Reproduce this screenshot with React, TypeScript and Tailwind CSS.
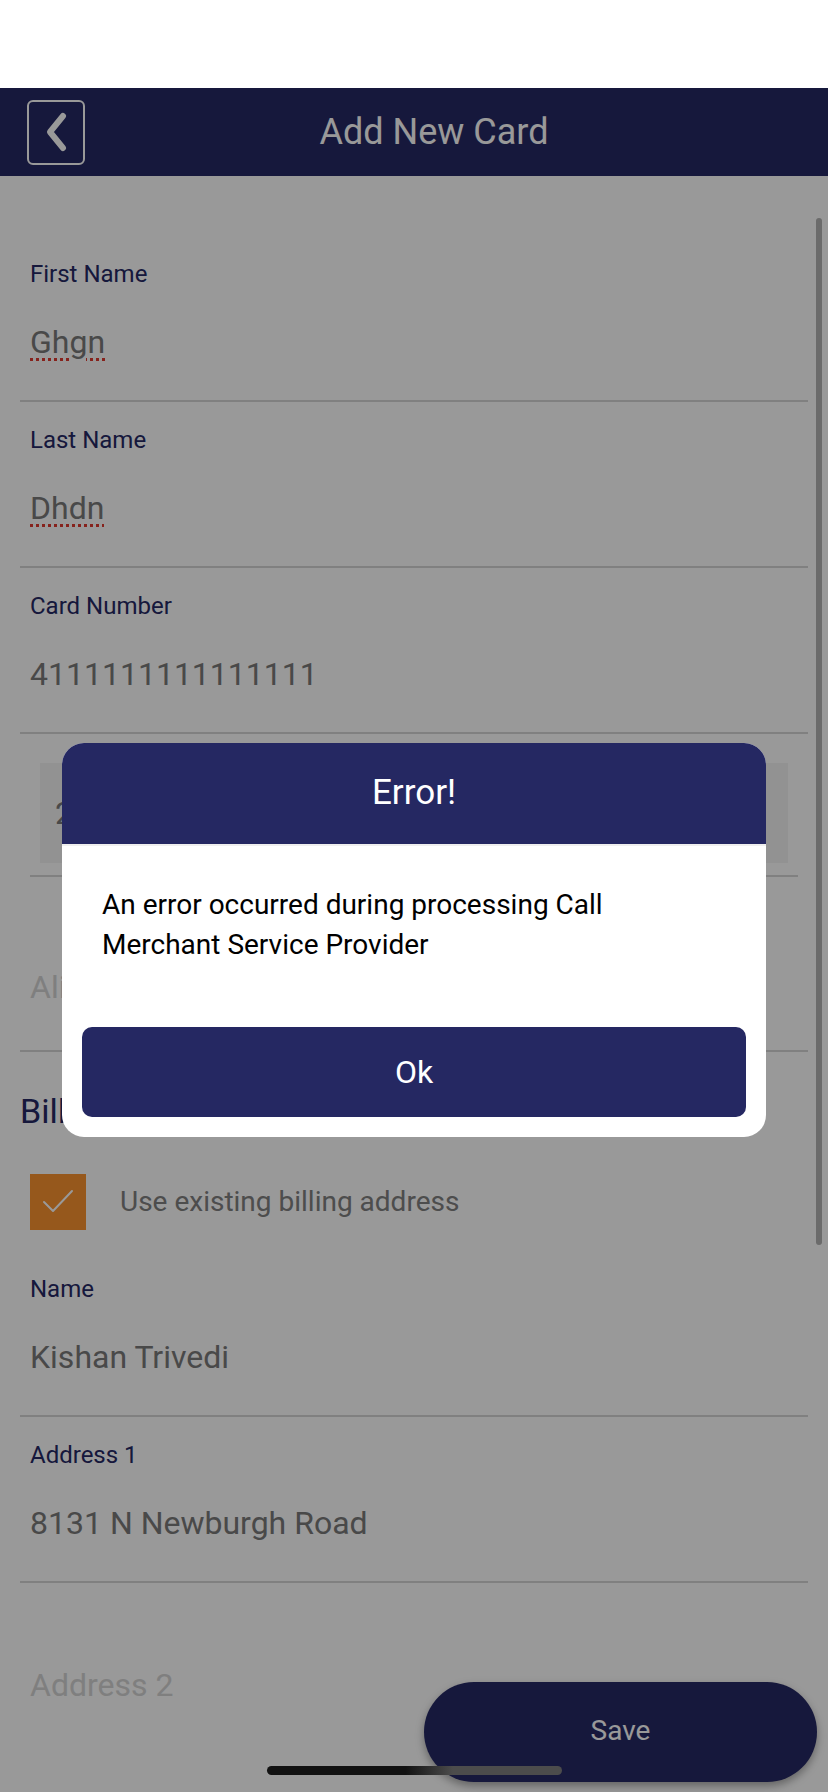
import React from 'react'

type FieldProps = {
  label?: string
  value?: string
  placeholder?: string
  spell?: boolean
  pad?: string
}

function Field({ label, value, placeholder, spell, pad = 'pt-[26px] pb-[42px]' }: FieldProps) {
  return (
    <div className={`border-b-2 border-[#d6d6d6] px-[10px] ${pad}`}>
      {label && <div className="h-[24px] text-[24px] leading-none text-[#252864] mb-[40px]">{label}</div>}
      <div className="h-[32px] text-[32px] leading-none">
        {value ? (
          <span
            className={
              spell
                ? 'text-[#7a7a7a] underline decoration-dotted decoration-[#e0392f] decoration-[3px] underline-offset-[5px]'
                : 'text-[#7a7a7a]'
            }
          >
            {value}
          </span>
        ) : (
          <span className="text-[#d4d4d4]">{placeholder}</span>
        )}
      </div>
    </div>
  )
}

export default function App() {
  return (
    <div className="relative w-[828px] h-[1792px] overflow-hidden bg-white font-['Roboto',sans-serif]">
      {/* status bar */}
      <div className="h-[88px] bg-white" />

      <header className="h-[88px] bg-[#252864] flex items-center">
        <button className="ml-[27px] w-[58px] h-[65px] border-2 border-white rounded-[6px] flex items-center justify-center">
          <svg width="30" height="48" viewBox="0 0 30 48">
            <path d="M22 8 L9 24 L22 40" fill="none" stroke="white" strokeWidth="6" strokeLinecap="round" strokeLinejoin="round" />
          </svg>
        </button>
        <h1 className="flex-1 pr-[45px] text-center text-white text-[36px] leading-none">Add New Card</h1>
      </header>

      <main className="px-[20px] pt-[60px]">
        <Field label="First Name" value="Ghgn" spell />
        <Field label="Last Name" value="Dhdn" spell />
        <Field label="Card Number" value="4111111111111111" />

        <div className="mx-[10px] pt-[29px] pb-[12px] border-b-2 border-[#d6d6d6]">
          <div className="mx-[10px] h-[100px] bg-[#f3f3f3] flex items-center pl-[15px] text-[32px] leading-none text-[#7a7a7a]">
            2026
          </div>
        </div>

        <Field placeholder="Alias" pad="pt-[94px] pb-[47px]" />

        <h2 className="mt-[42px] text-[34px] leading-none text-[#252864]">Billing Address</h2>

        <label className="mt-[46px] mb-[21px] flex items-center">
          <span className="ml-[10px] w-[56px] h-[56px] bg-[#fa9330] flex items-center justify-center">
            <svg width="56" height="56" viewBox="0 0 56 56">
              <path d="M14 28 L23 37 L42 17" fill="none" stroke="white" strokeWidth="2" strokeLinecap="round" strokeLinejoin="round" />
            </svg>
          </span>
          <span className="ml-[34px] text-[28px] leading-none text-[#808080]">Use existing billing address</span>
        </label>

        <Field label="Name" value="Kishan Trivedi" />
        <Field label="Address 1" value="8131 N Newburgh Road" />
        <div className="px-[10px] pt-[86px]">
          <div className="h-[32px] text-[32px] leading-none text-[#d4d4d4]">Address 2</div>
        </div>
      </main>

      {/* scrollbar */}
      <div className="absolute left-[816px] top-[218px] w-[6px] h-[1027px] rounded-full bg-[#b2b2b2]" />

      <button className="absolute left-[424px] top-[1682px] w-[393px] h-[100px] rounded-full bg-[#252864] shadow-[0_4px_8px_rgba(0,0,0,0.35)] text-white text-[28px] leading-none flex items-center justify-center pb-[3px]">
        Save
      </button>

      {/* dim overlay */}
      <div className="absolute left-0 right-0 top-[88px] bottom-0 bg-black/40" />

      {/* error dialog */}
      <div className="absolute left-[62px] top-[743px] w-[704px] h-[394px] rounded-[22px] bg-white overflow-hidden flex flex-col">
        <div className="h-[103px] bg-[#252862] border-b-2 border-[#efefef] flex items-center justify-center pb-[2px]">
          <span className="text-white text-[35px] leading-none">Error!</span>
        </div>
        <p className="pt-[39px] px-[40px] max-w-[600px] text-[28px] leading-[40px] text-black">
          An error occurred during processing Call Merchant Service Provider
        </p>
        <button className="mt-auto mx-[20px] mb-[20px] h-[90px] rounded-[10px] bg-[#252862] text-white text-[32px] leading-none flex items-center justify-center">
          Ok
        </button>
      </div>

      {/* home indicator */}
      <div className="absolute left-[267px] top-[1766px] w-[295px] h-[9px] rounded-full bg-[linear-gradient(to_right,#121212_0%,#121212_47%,#4c4c4c_63%,#4c4c4c_100%)]" />
    </div>
  )
}
